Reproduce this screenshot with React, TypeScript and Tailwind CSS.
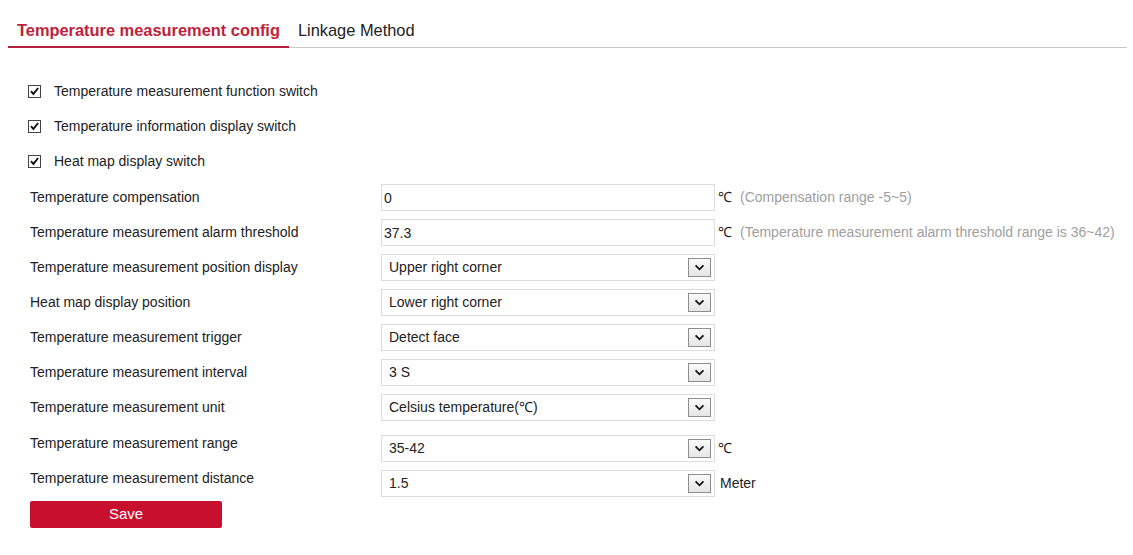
import { useState } from 'react';

type Row =
  | { kind: 'input'; label: string; value: string; unit: string; hint: string }
  | { kind: 'select'; label: string; value: string; unit?: string; tall?: boolean; low?: boolean };

const switches = [
  'Temperature measurement function switch',
  'Temperature information display switch',
  'Heat map display switch',
];

const rows: Row[] = [
  { kind: 'input', label: 'Temperature compensation', value: '0', unit: '℃', hint: '(Compensation range -5~5)' },
  {
    kind: 'input',
    label: 'Temperature measurement alarm threshold',
    value: '37.3',
    unit: '℃',
    hint: '(Temperature measurement alarm threshold range is 36~42)',
  },
  { kind: 'select', label: 'Temperature measurement position display', value: 'Upper right corner' },
  { kind: 'select', label: 'Heat map display position', value: 'Lower right corner' },
  { kind: 'select', label: 'Temperature measurement trigger', value: 'Detect face' },
  { kind: 'select', label: 'Temperature measurement interval', value: '3 S' },
  { kind: 'select', label: 'Temperature measurement unit', value: 'Celsius temperature(℃)' },
  { kind: 'select', label: 'Temperature measurement range', value: '35-42', unit: '℃', tall: true },
  { kind: 'select', label: 'Temperature measurement distance', value: '1.5', unit: 'Meter', low: true },
];

function CheckBox({ checked }: { checked: boolean }) {
  return (
    <span className="flex h-[13px] w-[13px] items-center justify-center border border-[#444] bg-white">
      {checked && (
        <svg viewBox="0 0 13 13" className="h-[13px] w-[13px]" aria-hidden="true">
          <path d="M2.3 6.2 L5.2 9.4 L10.8 2.4" fill="none" stroke="#111" strokeWidth="2.2" />
        </svg>
      )}
    </span>
  );
}

function SelectBox({ value }: { value: string }) {
  return (
    <div className="flex h-[27px] w-[334px] items-center justify-between border border-[#dcdcdc] bg-white pl-[7px] pr-[3px] text-[14px] text-[#222]">
      <span>{value}</span>
      <span className="flex h-[19px] w-[23px] items-center justify-center border border-[#8e8e8e] bg-gradient-to-b from-[#fafafa] to-[#e6e6e6]">
        <svg viewBox="0 0 12 8" className="h-[7px] w-[11px]" aria-hidden="true">
          <path d="M1.5 1.5 L6 6 L10.5 1.5" fill="none" stroke="#111" strokeWidth="2" />
        </svg>
      </span>
    </div>
  );
}

export default function App() {
  const [tab, setTab] = useState(0);

  return (
    <div className="h-[555px] w-[1133px] bg-white font-['Liberation_Sans',Arial,sans-serif] text-[#333]">
      <div className="ml-[8px] mr-[6px] pt-[14px]">
        <div className="flex h-[34px] items-stretch border-b border-[#c8c8c8]">
          {['Temperature measurement config', 'Linkage Method'].map((t, i) => (
            <button
              key={t}
              onClick={() => setTab(i)}
              className={`-mb-px flex items-center px-[9px] text-[16.4px] ${
                tab === i
                  ? 'border-b-2 border-[#b3213a] font-bold text-[#c01f3b]'
                  : 'border-b-2 border-transparent text-[#222]'
              }`}
            >
              {t}
            </button>
          ))}
        </div>

        <div className="mt-[26px] pl-[22px]">
          {switches.map((s) => (
            <div key={s} className="flex h-[35px] items-center text-[14px] text-[#222]">
              <span className="-ml-[2px] mr-[13px]">
                <CheckBox checked />
              </span>
              {s}
            </div>
          ))}

          <div className="pt-px">
            {rows.map((r) => (
              <div
                key={r.label}
                className={`flex items-center text-[14px] ${r.kind === 'select' && r.tall ? 'h-[41px]' : 'h-[35px]'}`}
              >
                <span
                  className={`w-[351px] text-[#222] ${
                    r.kind === 'select' && r.tall ? 'pb-[5px]' : r.kind === 'select' && r.low ? 'pb-[11px]' : ''
                  }`}
                >
                  {r.label}
                </span>
                {r.kind === 'input' ? (
                  <>
                    <input
                      readOnly
                      value={r.value}
                      className="h-[27px] w-[334px] border border-[#dcdcdc] bg-white pl-[2px] text-[14px] text-[#222] outline-none"
                    />
                    <span className="ml-[3px] text-[#222]">{r.unit}</span>
                    <span className="ml-[8px] text-[#a0a0a0]">{r.hint}</span>
                  </>
                ) : (
                  <>
                    <div className={r.tall ? 'pt-[5px]' : ''}>
                      <SelectBox value={r.value} />
                    </div>
                    {r.unit && (
                      <span className={`text-[#222] ${r.tall ? 'ml-[3px] pt-[5px]' : 'ml-[5px]'}`}>{r.unit}</span>
                    )}
                  </>
                )}
              </div>
            ))}
          </div>

          <button className="h-[27px] w-[192px] rounded-[2px] bg-[#c8102e] text-[15px] text-white">Save</button>
        </div>
      </div>
    </div>
  );
}
